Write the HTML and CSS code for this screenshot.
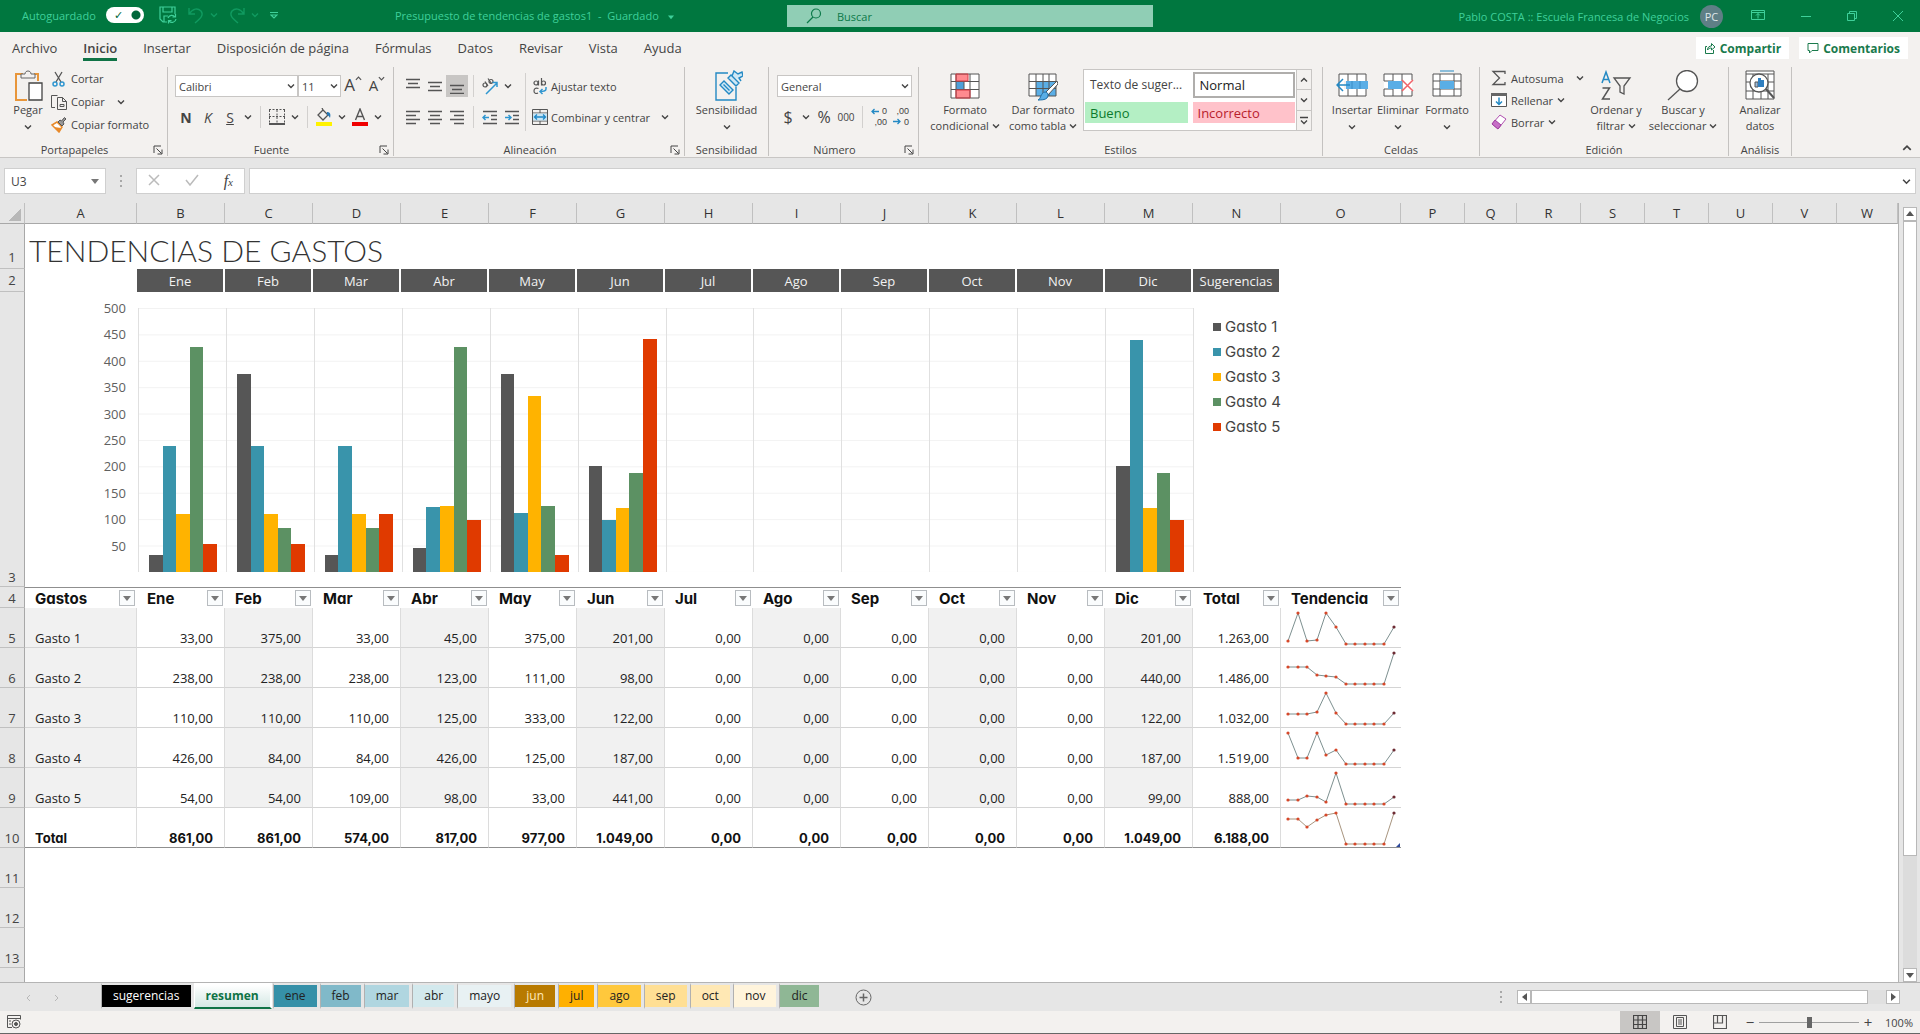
FILE: index.html
```
<!DOCTYPE html>
<html lang="es">
  <head>
    <meta charset="UTF-8" />
    <meta name="viewport" content="width=device-width, initial-scale=1.0" />
    <title>Presupuesto de tendencias de gastos1</title>
    <link rel="stylesheet" href="styles.css">
  </head>
  <body>
    <!-- icon sprite -->
    <svg class="sprite" aria-hidden="true">
      <symbol id="caret" viewBox="0 0 8 8"><path d="M1 2.5l3 3 3-3" fill="none" stroke="currentColor" stroke-width="1.4"/></symbol>
      <symbol id="caret-up" viewBox="0 0 8 8"><path d="M1 5.5l3-3 3 3" fill="none" stroke="currentColor" stroke-width="1.4"/></symbol>
      <symbol id="tri" viewBox="0 0 8 8"><path d="M0 2h8L4 7z" fill="currentColor"/></symbol>
      <symbol id="launcher" viewBox="0 0 10 10"><path d="M1 8V1h7M3.500 3.500l5 5M9 4.500V9H4.500" fill="none" stroke="currentColor"/></symbol>
      <symbol id="al-top" viewBox="0 0 16 16"><path d="M1 1.500h14M3 5.500h10M1 9.500h14" fill="none" stroke="currentColor" stroke-width="1.3"/></symbol>
      <symbol id="al-mid" viewBox="0 0 16 16"><path d="M1 4.500h14M3 8.500h10M1 12.500h14" fill="none" stroke="currentColor" stroke-width="1.3"/></symbol>
      <symbol id="al-bot" viewBox="0 0 16 16"><path d="M1 7.500h14M3 11.500h10M1 15.500h14" fill="none" stroke="currentColor" stroke-width="1.3"/></symbol>
      <symbol id="al-left" viewBox="0 0 16 16"><path d="M1 2.500h14M1 6.500h10M1 10.500h14M1 14.500h10" fill="none" stroke="currentColor" stroke-width="1.3"/></symbol>
      <symbol id="al-center" viewBox="0 0 16 16"><path d="M1 2.500h14M3 6.500h10M1 10.500h14M3 14.500h10" fill="none" stroke="currentColor" stroke-width="1.3"/></symbol>
      <symbol id="al-right" viewBox="0 0 16 16"><path d="M1 2.500h14M5 6.500h10M1 10.500h14M5 14.500h10" fill="none" stroke="currentColor" stroke-width="1.3"/></symbol>
    </svg>

    <header class="titlebar">
      <label class="autosave">Autoguardado
        <input type="checkbox" class="switch" checked>
      </label>
      <button class="tb-btn" aria-label="Guardar">
        <svg width="18" height="18" viewBox="0 0 18 18" fill="none" stroke="currentColor" stroke-width="1.2"><path d="M8 16H4l-3-3V1h15v7M4 1v5h9V1M5 16v-6h4"/><path d="M9 12a4 4 0 0 1 7-1M16.500 8v3h-3M17 13a4 4 0 0 1-7 2M9.500 17.500v-3h3"/></svg>
      </button>
      <button class="tb-btn dim" aria-label="Deshacer">
        <svg width="16" height="18" viewBox="0 0 16 18" fill="none" stroke="currentColor" stroke-width="1.4"><path d="M1 2v6h6M1 8C5 2 10 2 13 5c3 4 0 7-6 12"/></svg>
        <svg width="8" height="8"><use href="#caret"/></svg>
      </button>
      <button class="tb-btn dim" aria-label="Rehacer">
        <svg width="16" height="18" viewBox="0 0 16 18" fill="none" stroke="currentColor" stroke-width="1.400"><path d="M15 2v6H9M15 8C11 2 6 2 3 5c-3 4 0 7 6 12"/></svg>
        <svg width="8" height="8"><use href="#caret"/></svg>
      </button>
      <button class="tb-btn" aria-label="Personalizar barra">
        <svg width="8" height="9" viewBox="0 0 8 9" fill="none" stroke="currentColor" stroke-width="1.2"><path d="M0 1.500h8M1 4l3 3 3-3z"/></svg>
      </button>
      <div class="doc-name">Presupuesto de tendencias de gastos1 &nbsp;-&nbsp; Guardado <svg width="6" height="6"><use href="#tri"/></svg></div>
      <label class="search">
        <svg width="16" height="16" viewBox="0 0 16 16" fill="none" stroke="currentColor" stroke-width="1.2"><circle cx="10" cy="5.500" r="4.500"/><path d="M7 9l-6 6"/></svg>
        <input type="text" placeholder="Buscar" aria-label="Buscar">
      </label>
      <div class="account">
        <span>Pablo COSTA :: Escuela Francesa de Negocios</span>
        <span class="avatar">PC</span>
      </div>
      <div class="window-btns">
        <button aria-label="Opciones de la cinta"><svg width="14" height="12" viewBox="0 0 14 12" fill="none" stroke="currentColor"><path d="M.5 1.500h13v9H.5zM.5 3.500h13M7 9.500v-5M5 6.500l2-2 2 2"/></svg></button>
        <button aria-label="Minimizar"><svg width="10" height="10" viewBox="0 0 10 10" fill="none" stroke="currentColor"><path d="M0 5.500h10"/></svg></button>
        <button aria-label="Restaurar"><svg width="10" height="10" viewBox="0 0 10 10" fill="none" stroke="currentColor"><path d="M.5 2.500h7v7h-7zM2.500 2V.5h7v7H8"/></svg></button>
        <button aria-label="Cerrar"><svg width="10" height="10" viewBox="0 0 10 10" fill="none" stroke="currentColor"><path d="M0 0l10 10M10 0L0 10"/></svg></button>
      </div>
    </header>

    <nav class="tabs">
      <a href="#">Archivo</a>
      <a href="#" class="active">Inicio</a>
      <a href="#">Insertar</a>
      <a href="#">Disposición de página</a>
      <a href="#">Fórmulas</a>
      <a href="#">Datos</a>
      <a href="#">Revisar</a>
      <a href="#">Vista</a>
      <a href="#">Ayuda</a>
      <div class="tabs-right">
        <button class="share"><svg width="12" height="12" viewBox="0 0 12 12" fill="none" stroke="currentColor"><path d="M3 4.500H1.500v7h8V8M3.500 8c0-3 2-4 4-4V1.500L11 5 7.500 8V6c-2 0-3 .5-4 2z"/></svg>Compartir</button>
        <button class="share"><svg width="12" height="12" viewBox="0 0 12 12" fill="none" stroke="currentColor"><path d="M1 1.500h10v7H5L2.500 11V8.500H1z"/></svg>Comentarios</button>
      </div>
    </nav>

    <section class="ribbon">
      <div class="group g-clip">
        <div class="body">
          <button class="big">
            <svg width="32" height="32" viewBox="0 0 32 32" fill="none"><path d="M11 4H4v26h11M22 4h4v7" stroke="#e8963a" stroke-width="2"/><path d="M9 8V4h4c0-4 6-4 6 0h4v4z" fill="#f3f1ef" stroke="#666"/><path d="M17 13h13v17H17z" fill="#fff" stroke="#444" stroke-width="1.300"/></svg>
            <span>Pegar</span><svg width="8" height="8"><use href="#caret"/></svg>
          </button>
          <div class="stack">
            <button><svg width="16" height="16" viewBox="0 0 16 16" fill="none"><path d="M4 1l6 10M11 1L5 11" stroke="#555" stroke-width="1.300"/><circle cx="4" cy="13" r="2" stroke="#2f96d0" stroke-width="1.500"/><circle cx="11" cy="13" r="2" stroke="#2f96d0" stroke-width="1.500"/></svg>Cortar</button>
            <button><svg width="16" height="16" viewBox="0 0 16 16" fill="none" stroke="#555"><path d="M4 13.500H.5V1.500h6M6.500 3.500h5l4 4v8h-9zM11.500 3.500v4h4M9 10.500h4v2H9z"/></svg>Copiar<svg class="far" width="8" height="8"><use href="#caret"/></svg></button>
            <button><svg width="16" height="16" viewBox="0 0 16 16"><path d="M1 8l5-3 5 5-3 5z" fill="#fff" stroke="#e88a2a" stroke-width="1.500"/><path d="M3 10l5 5 2-4z" fill="#e88a2a"/><path d="M7 5l4 4 2-2-1-2 3-3-1.500-1.500L10.500 4 9 3z" fill="#999" stroke="#555"/></svg>Copiar formato</button>
          </div>
        </div>
        <div class="caption more">Portapapeles<svg width="10" height="10"><use href="#launcher"/></svg></div>
      </div>

      <div class="group g-font">
        <div class="body rows">
          <div class="row">
            <select class="sel-font" aria-label="Fuente"><option>Calibri</option></select>
            <select class="sel-size" aria-label="Tamaño"><option>11</option></select>
            <button class="tool grow">A<svg width="7" height="7"><use href="#caret-up"/></svg></button>
            <button class="tool shrink">A<svg width="7" height="7"><use href="#caret"/></svg></button>
          </div>
          <div class="row">
            <button class="tool"><b>N</b></button>
            <button class="tool"><i>K</i></button>
            <button class="tool"><u>S</u></button>
            <button class="drop" aria-label="Subrayado"><svg width="8" height="8"><use href="#caret"/></svg></button>
            <i class="sep"></i>
            <button class="tool" aria-label="Bordes"><svg width="16" height="16" viewBox="0 0 16 16" fill="none" stroke="#555"><path d="M.5 1v13M8 1v13M15.500 1v13M0 .5h16M0 7.500h16" stroke-dasharray="2 1.500"/><path d="M0 15h16" stroke-width="2"/></svg></button>
            <button class="drop" aria-label="Más bordes"><svg width="8" height="8"><use href="#caret"/></svg></button>
            <i class="sep"></i>
            <button class="tool" aria-label="Color de relleno"><svg width="18" height="18" viewBox="0 0 18 18" fill="none"><path d="M8 2l5 5-5 5-5-5zM8 2L7 0" stroke="#555" stroke-width="1.300"/><path d="M12 4c3 0 4 2 3 6-1-2-2-3-3-3z" fill="#2878b4"/><path d="M1 14h16v4H1z" fill="#fff200"/></svg></button>
            <button class="drop" aria-label="Más rellenos"><svg width="8" height="8"><use href="#caret"/></svg></button>
            <button class="tool" aria-label="Color de fuente"><svg width="16" height="18" viewBox="0 0 16 18" fill="none"><path d="M3.500 12L8 1l4.500 11M5 8.500h6" stroke="#555" stroke-width="1.400"/><path d="M0 14h16v4H0z" fill="#f00000"/></svg></button>
            <button class="drop" aria-label="Más colores"><svg width="8" height="8"><use href="#caret"/></svg></button>
          </div>
        </div>
        <div class="caption more">Fuente<svg width="10" height="10"><use href="#launcher"/></svg></div>
      </div>

      <div class="group g-align">
        <div class="body">
          <div class="rows align-left">
            <div class="row">
              <button class="tool" aria-label="Alinear arriba"><svg width="16" height="16"><use href="#al-top"/></svg></button>
              <button class="tool" aria-label="Alinear al medio"><svg width="16" height="16"><use href="#al-mid"/></svg></button>
              <button class="tool on" aria-label="Alinear abajo"><svg width="16" height="16"><use href="#al-bot"/></svg></button>
              <i class="sep"></i>
              <button class="tool" aria-label="Orientación"><svg width="18" height="18" viewBox="0 0 18 18" fill="none"><g stroke="#555" stroke-width="1.200"><circle cx="4" cy="8" r="2"/><path d="M4 4.500l3 4.500M7 1.500l3.500 5"/><circle cx="10" cy="4.500" r="2"/></g><path d="M5 17L16 6M11.500 5.500H16V10" stroke="#2f96d0" stroke-width="1.500"/></svg></button>
              <button class="drop" aria-label="Más orientación"><svg width="8" height="8"><use href="#caret"/></svg></button>
            </div>
            <div class="row">
              <button class="tool" aria-label="Izquierda"><svg width="16" height="16"><use href="#al-left"/></svg></button>
              <button class="tool" aria-label="Centrar"><svg width="16" height="16"><use href="#al-center"/></svg></button>
              <button class="tool" aria-label="Derecha"><svg width="16" height="16"><use href="#al-right"/></svg></button>
              <i class="sep"></i>
              <button class="tool" aria-label="Disminuir sangría"><svg width="16" height="16" viewBox="0 0 16 16" fill="none"><path d="M1 2.500h14M9 6.500h6M9 10.500h6M1 14.500h14" stroke="#555" stroke-width="1.300"/><path d="M7 8.500H1M3.500 6L1 8.500 3.500 11" stroke="#2f96d0" stroke-width="1.500"/></svg></button>
              <button class="tool" aria-label="Aumentar sangría"><svg width="16" height="16" viewBox="0 0 16 16" fill="none"><path d="M1 2.500h14M9 6.500h6M9 10.500h6M1 14.500h14" stroke="#555" stroke-width="1.300"/><path d="M1 8.500h6M4.500 6L7 8.500 4.500 11" stroke="#2f96d0" stroke-width="1.500"/></svg></button>
            </div>
          </div>
          <i class="sep tall"></i>
          <div class="rows">
            <button class="wide"><svg width="16" height="18" viewBox="0 0 16 18" fill="none"><g stroke="#555" stroke-width="1.200"><circle cx="4" cy="6" r="2"/><path d="M6.500 3.500v5M9.500 1v7.500M6.500 11.500c-3-1-4.500 0-4.500 2.500s2 3 4 2"/><circle cx="11.500" cy="6" r="2"/></g><path d="M14 10v2c0 2-2 2.500-6 2.500M10.500 12L8 14.500l2.500 2.500" stroke="#2f96d0" stroke-width="1.500"/></svg>Ajustar texto</button>
            <button class="wide"><svg width="16" height="16" viewBox="0 0 16 16" fill="none"><path d="M.5.5h15v15H.5zM.5 4h15M.5 12h15M8 .5V4M8 12v3.500" stroke="#555"/><path d="M1 4.500h14v7H1z" fill="#c8e6f6"/><path d="M2.500 8h11M5 5.500L2.500 8 5 10.500M11 5.500L13.500 8 11 10.500" stroke="#1e88c8" stroke-width="1.300"/></svg>Combinar y centrar<svg class="far" width="8" height="8"><use href="#caret"/></svg></button>
          </div>
        </div>
        <div class="caption more">Alineación<svg width="10" height="10"><use href="#launcher"/></svg></div>
      </div>

      <div class="group g-sens">
        <div class="body">
          <button class="big">
            <svg width="32" height="32" viewBox="0 0 32 32" fill="none" stroke="#2389c4" stroke-width="1.400"><path d="M17 3H5v27h20V17"/><path d="M9 15l4-4 9 9-4 4zM12.500 14.500l6 6" fill="#cfe8f5"/><path d="M17 8l3-3 8 8-3 3zM21 6l2-5 4 3 4-2 1 4-4 2 2 3" fill="#cfe8f5"/></svg>
            <span>Sensibilidad</span><svg width="8" height="8"><use href="#caret"/></svg>
          </button>
        </div>
        <div class="caption">Sensibilidad</div>
      </div>

      <div class="group g-num">
        <div class="body rows">
          <div class="row"><select class="sel-num" aria-label="Formato de número"><option>General</option></select></div>
          <div class="row">
            <button class="tool money">$</button>
            <button class="drop" aria-label="Moneda"><svg width="8" height="8"><use href="#caret"/></svg></button>
            <button class="tool money">%</button>
            <button class="tool zeros">000</button>
            <i class="sep"></i>
            <button class="tool dec"><span>0</span><span>,00</span><svg width="8" height="7" viewBox="0 0 8 7" fill="none" stroke="#2389c4" stroke-width="1.300"><path d="M8 3.500H1M3.500 1L1 3.500 3.500 6"/></svg></button>
            <button class="tool dec less"><span>,00</span><span>0</span><svg width="8" height="7" viewBox="0 0 8 7" fill="none" stroke="#2389c4" stroke-width="1.300"><path d="M0 3.500h7M4.500 1L7 3.500 4.500 6"/></svg></button>
          </div>
        </div>
        <div class="caption more">Número<svg width="10" height="10"><use href="#launcher"/></svg></div>
      </div>

      <div class="group g-styles">
        <div class="body">
          <button class="big w78">
            <svg width="30" height="32" viewBox="0 0 30 32" fill="none"><path d="M1 4h28v24H1z" fill="#fff"/><path d="M6 4h12v7H6zM6 20h14v8H6z" fill="#ff8a8f"/><path d="M6 12h8v7H6z" fill="#4f9fd8"/><path d="M1 4h28v24H1zM1 11.500h28M1 19.500h28M6 4v24M14 11v9M20 4v24" stroke="#555"/><path d="M6 4h12v7H6zM6 20h14v8H6z" stroke="#d83b44"/></svg>
            <span>Formato<br>condicional <svg width="8" height="8"><use href="#caret"/></svg></span>
          </button>
          <button class="big w78">
            <svg width="30" height="32" viewBox="0 0 30 32" fill="none"><path d="M1 4h27v22H1z" fill="#fff"/><path d="M8 11h20v15H8z" fill="#5aaee6"/><path d="M1 4h27v22H1zM1 11.500h27M1 18.500h27M8 4v22M15 4v22M21 4v22" stroke="#555"/><path d="M29 11L18 22l2 3 10-11z" fill="#fff" stroke="#555"/><path d="M17 22c3 0 4 3 2 6-2 2-6 2-9 2 3-1 3-8 7-8z" fill="#5aaee6" stroke="#1f6fa8"/></svg>
            <span>Dar formato<br>como tabla <svg width="8" height="8"><use href="#caret"/></svg></span>
          </button>
          <div class="gallery">
            <div class="swatches">
              <button>Texto de suger...</button>
              <button class="normal">Normal</button>
              <button class="good">Bueno</button>
              <button class="bad">Incorrecto</button>
            </div>
            <div class="gallery-nav">
              <button aria-label="Arriba"><svg width="8" height="8"><use href="#caret-up"/></svg></button>
              <button aria-label="Abajo"><svg width="8" height="8"><use href="#caret"/></svg></button>
              <button aria-label="Más estilos"><svg width="8" height="9" viewBox="0 0 8 9" fill="none" stroke="currentColor" stroke-width="1.300"><path d="M0 1.500h8M1 4.500l3 3 3-3"/></svg></button>
            </div>
          </div>
        </div>
        <div class="caption">Estilos</div>
      </div>

      <div class="group g-cells">
        <div class="body">
          <button class="big w46">
            <svg width="32" height="32" viewBox="0 0 32 32" fill="none"><path d="M3 4h27v22H3z" fill="#fff"/><path d="M3 4h27v22H3zM12 4v22M21 4v22" stroke="#555"/><path d="M9 11h23v8H9z" fill="#5aaee6"/><path d="M16 11v8M24 11v8" stroke="#3b8cc4"/><path d="M9 11v8" stroke="#f3f1ef" stroke-width="2"/><path d="M14 15H1M7 9l-6 6 6 6" stroke="#2389c4" stroke-width="1.500"/></svg>
            <span>Insertar</span><svg width="8" height="8"><use href="#caret"/></svg>
          </button>
          <button class="big w46">
            <svg width="32" height="32" viewBox="0 0 32 32" fill="none"><path d="M2 4h28v22H2z" fill="#fff"/><path d="M2 11V4h28v6M2 19v7h28v-5M11 4v22M20 4v22M2 11h9M2 19h9" stroke="#555"/><path d="M6 11h14v8H6z" fill="#5aaee6"/><path d="M20 10l11 11M31 10L20 21" stroke="#f0636a" stroke-width="1.500"/></svg>
            <span>Eliminar</span><svg width="8" height="8"><use href="#caret"/></svg>
          </button>
          <button class="big w52">
            <svg width="32" height="32" viewBox="0 0 32 32" fill="none"><path d="M2 4h28v22H2z" fill="#fff"/><path d="M2 4h28v22H2zM9 4v22M23 4v22M2 11h28M2 19h28" stroke="#555"/><path d="M9 11h14v8H9z" fill="#5aaee6"/><path d="M9 1h14" stroke="#2389c4"/></svg>
            <span>Formato</span><svg width="8" height="8"><use href="#caret"/></svg>
          </button>
        </div>
        <div class="caption">Celdas</div>
      </div>

      <div class="group g-edit">
        <div class="body">
          <div class="stack">
            <button><svg width="16" height="16" viewBox="0 0 16 16" fill="none" stroke="#555" stroke-width="1.300"><path d="M14 4V1.500H2L8.500 8 2 14.500h12V12"/></svg>Autosuma<svg class="far" width="8" height="8"><use href="#caret"/></svg></button>
            <button><svg width="16" height="16" viewBox="0 0 16 16" fill="none"><path d="M.5 1.500h15v13H.5z" fill="#fff" stroke="#555"/><path d="M0 1h16v3H0z" fill="#666"/><path d="M8 5.500v7M5 9.500l3 3 3-3" stroke="#2389c4" stroke-width="1.500"/></svg>Rellenar<svg width="8" height="8"><use href="#caret"/></svg></button>
            <button><svg width="16" height="16" viewBox="0 0 16 16"><path d="M1 10l8-9 6 4-8 10z" fill="#fff" stroke="#b04fb0"/><path d="M1 10l3-4 6 5-3 4z" fill="#c66fc6" stroke="#a040a0"/></svg>Borrar<svg width="8" height="8"><use href="#caret"/></svg></button>
          </div>
          <button class="big w66">
            <svg width="32" height="32" viewBox="0 0 32 32" fill="none"><path d="M2 13L6 2l4 11M3.500 9.500h5" stroke="#2389c4" stroke-width="1.500"/><path d="M2.500 18h7l-7 11h7.500" stroke="#555" stroke-width="1.500"/><path d="M14 8h16l-6 8v8l-4-2v-6z" stroke="#555" stroke-width="1.300"/></svg>
            <span>Ordenar y<br>filtrar <svg width="8" height="8"><use href="#caret"/></svg></span>
          </button>
          <button class="big w68">
            <svg width="32" height="32" viewBox="0 0 32 32" fill="none" stroke="#555" stroke-width="1.300"><circle cx="20" cy="11" r="10.500" fill="#fff"/><path d="M13 19L1 30"/></svg>
            <span>Buscar y<br>seleccionar <svg width="8" height="8"><use href="#caret"/></svg></span>
          </button>
        </div>
        <div class="caption">Edición</div>
      </div>

      <div class="group g-anal">
        <div class="body">
          <button class="big">
            <svg width="32" height="32" viewBox="0 0 32 32" fill="none"><path d="M2 1h28v28H2z" fill="#fff"/><path d="M2 1h28v28H2zM2 4h28M2 12h28M2 21h28M9 4v25M17 4v25M24 4v25" stroke="#555"/><circle cx="15" cy="13" r="9" fill="#fff" stroke="#555" stroke-width="1.300"/><path d="M22 19l8 9" stroke="#555" stroke-width="2"/><path d="M11 12h3v5h-3z" fill="#9bd" stroke="#555"/><path d="M14 8h3v9h-3zM17 10h3v7h-3z" fill="#2f7fc0"/></svg>
            <span>Analizar<br>datos</span>
          </button>
        </div>
        <div class="caption">Análisis</div>
      </div>
      <button class="collapse" aria-label="Contraer la cinta"><svg width="10" height="10"><use href="#caret-up"/></svg></button>
    </section>

    <div class="formula-bar">
      <label class="name-box">
        <input type="text" value="U3" aria-label="Cuadro de nombres">
        <svg width="8" height="8"><use href="#tri"/></svg>
      </label>
      <span class="dots"></span>
      <div class="fx">
        <button aria-label="Cancelar"><svg width="12" height="12" viewBox="0 0 12 12" fill="none" stroke="#bbb" stroke-width="1.500"><path d="M1 1l10 10M11 1L1 11"/></svg></button>
        <button aria-label="Introducir"><svg width="14" height="12" viewBox="0 0 14 12" fill="none" stroke="#bbb" stroke-width="1.500"><path d="M1 6l4 5 8-10"/></svg></button>
        <button class="fn" aria-label="Insertar función"><i>f<small>x</small></i></button>
      </div>
      <label class="formula">
        <input type="text" aria-label="Barra de fórmulas">
        <svg width="9" height="9"><use href="#caret"/></svg>
      </label>
    </div>

    <main class="sheet">
      <div class="grid-wrap">
        <table class="grid">
          <colgroup>
            <col class="c-head"><col class="c-a"><col class="c-m" span="13"><col class="c-o"><col class="c-p"><col class="c-q"><col class="c-p" span="5"><col>
          </colgroup>
          <thead><tr id="letters"></tr></thead>
          <tbody id="rows"></tbody>
        </table>
      </div>
      <div class="vscroll">
        <button aria-label="Subir"><svg width="8" height="8" viewBox="0 0 8 8"><path d="M0 6h8L4 1z" fill="currentColor"/></svg></button>
        <div class="vtrack"><div class="vthumb"></div></div>
        <button aria-label="Bajar"><svg width="8" height="8"><use href="#tri"/></svg></button>
      </div>
    </main>

    <nav class="sheet-tabs">
      <button class="nav" aria-label="Anterior"><svg width="5" height="8" viewBox="0 0 5 8"><path d="M4 1L1 4l3 3" fill="none" stroke="currentColor"/></svg></button>
      <button class="nav" aria-label="Siguiente"><svg width="5" height="8" viewBox="0 0 5 8"><path d="M1 1l3 3-3 3" fill="none" stroke="currentColor"/></svg></button>
      <div class="tab-list">
        <a href="#" class="t-sug">sugerencias</a>
        <a href="#" class="t-res">resumen</a>
        <a href="#" class="t-ene">ene</a>
        <a href="#" class="t-feb">feb</a>
        <a href="#" class="t-mar">mar</a>
        <a href="#" class="t-abr">abr</a>
        <a href="#" class="t-may">mayo</a>
        <a href="#" class="t-jun">jun</a>
        <a href="#" class="t-jul">jul</a>
        <a href="#" class="t-ago">ago</a>
        <a href="#" class="t-sep">sep</a>
        <a href="#" class="t-oct">oct</a>
        <a href="#" class="t-nov">nov</a>
        <a href="#" class="t-dic">dic</a>
      </div>
      <button class="add" aria-label="Hoja nueva"><svg width="17" height="17" viewBox="0 0 17 17" fill="none" stroke="#666"><circle cx="8.500" cy="8.500" r="7.500"/><path d="M4.500 8.500h8M8.500 4.500v8" stroke-width="1.500"/></svg></button>
      <div class="hscroll">
        <span class="dots"></span>
        <button aria-label="Izquierda"><svg width="5" height="8" viewBox="0 0 5 8"><path d="M5 0v8L0 4z" fill="currentColor"/></svg></button>
        <div class="htrack"><div class="hthumb"></div></div>
        <button aria-label="Derecha"><svg width="5" height="8" viewBox="0 0 5 8"><path d="M0 0v8l5-4z" fill="currentColor"/></svg></button>
      </div>
    </nav>

    <footer class="status">
      <svg class="macro" width="14" height="14" viewBox="0 0 14 14" fill="none" stroke="#555"><path d="M5 12.500H.5V.5h13v4M.5 3.500h13M2 6h2M2 9h2"/><circle cx="9" cy="9" r="4"/><circle cx="9" cy="9" r="1.500" fill="#555"/></svg>
      <div class="views">
        <button class="on" aria-label="Normal"><svg width="14" height="14" viewBox="0 0 14 14" fill="none" stroke="#444" stroke-width="1.200"><path d="M.5.5h13v13H.5zM.5 5h13M.5 9.500h13M5 .5v13M9.500.5v13"/></svg></button>
        <button aria-label="Diseño de página"><svg width="14" height="14" viewBox="0 0 14 14" fill="none" stroke="#555"><path d="M.5.5h13v13H.5zM3.500 2.500h7v9h-7zM5 5h4M5 7h4M5 9h4"/></svg></button>
        <button aria-label="Salto de página"><svg width="14" height="14" viewBox="0 0 14 14" fill="none" stroke="#555" stroke-width="1.200"><path d="M.5.5h13v13H.5zM4.500.5v7.500h5V.5M.5 8h4"/></svg></button>
      </div>
      <button class="zoom-btn" aria-label="Alejar">−</button>
      <input type="range" class="zoom" min="10" max="190" value="100" aria-label="Zoom">
      <button class="zoom-btn" aria-label="Acercar">+</button>
      <span class="percent">100%</span>
    </footer>
    <script src="script.js"></script>
  </body>
</html>
```
FILE: styles.css
```
* {
  box-sizing: border-box;
  margin: 0;
  padding: 0;
}

body {
  height: 100vh;
  display: flex;
  flex-direction: column;
  overflow: hidden;
  font-family: "Open Sans", "Noto Sans", sans-serif;
  font-size: 12px;
  color: #444;
  background-color: #e6e6e6;
}

button,
input,
select {
  font: inherit;
  color: inherit;
  background: none;
  border: 0;
}

a {
  color: inherit;
  text-decoration: none;
}

svg {
  flex: none;
}

.sprite {
  display: none;
}

/* title bar */
.titlebar {
  display: flex;
  align-items: center;
  height: 32px;
  padding: 0 17px 2px 22px;
  font-size: 11px;
  color: #3fd09a;
  background-color: #00773f;
}

.autosave {
  display: flex;
  align-items: center;
  justify-content: space-between;
  width: 122px;
  margin-right: 15px;
}

.switch {
  appearance: none;
  width: 38px;
  height: 16px;
  border-radius: 8px;
  background: radial-gradient(circle at 30px 8px, #00663a 4px, transparent 5px) #fff;
}

.switch::before {
  content: "✓";
  display: block;
  padding-left: 8px;
  line-height: 16px;
  color: #00663a;
}

.tb-btn {
  display: flex;
  align-items: center;
  gap: 6px;
  margin-right: 11px;
}

.tb-btn.dim {
  color: #109a60;
}

.doc-name {
  width: 498px;
  padding-left: 106px;
  white-space: nowrap;
}

.doc-name svg {
  margin-left: 6px;
}

.search {
  display: flex;
  align-items: center;
  gap: 15px;
  flex: 0 1 366px;
  height: 22px;
  margin-top: 2px;
  padding-left: 19px;
  color: #0c7a4a;
  background-color: #90ceb5;
}

.search input {
  flex: 1;
}

.search input::placeholder {
  color: #0c7a4a;
}

.account {
  display: flex;
  align-items: center;
  gap: 11px;
  margin: 2px 0 0 auto;
}

.avatar {
  width: 23px;
  height: 23px;
  border-radius: 50%;
  line-height: 23px;
  text-align: center;
  color: #dfe6ea;
  background-color: #5f7f86;
}

.window-btns {
  display: flex;
  gap: 36px;
  margin: 2px 0 0 28px;
}

/* ribbon tabs */
.tabs {
  display: flex;
  align-items: center;
  gap: 26px;
  height: 32px;
  padding: 0 12px;
  font-size: 13px;
  background-color: #f3f1ef;
}

.tabs > a {
  height: 26px;
  line-height: 26px;
}

.tabs .active {
  font-weight: 600;
  border-bottom: 3px solid #0f7346;
}

.tabs-right {
  display: flex;
  gap: 10px;
  margin-left: auto;
}

.share {
  display: flex;
  align-items: center;
  gap: 4px;
  height: 22px;
  padding: 0 8px;
  font-size: 12px;
  font-weight: 700;
  color: #1a7a4c;
  background-color: #fff;
}

/* ribbon */
.ribbon {
  display: flex;
  padding: 3px 0 1px;
  font-size: 11px;
  border-bottom: 1px solid #c8c6c4;
  background-color: #f3f1ef;
}

.group {
  flex: none;
  border-right: 1px solid #c4c2c0;
}

.g-clip { width: 168px; }
.g-font { width: 226px; }
.g-align { width: 291px; }
.g-sens { width: 84px; }
.g-num { width: 150px; }
.g-styles { width: 404px; }
.g-cells { width: 157px; }
.g-edit { width: 249px; }
.g-anal { width: 63px; }

.body {
  display: flex;
  height: 77px;
}

.caption {
  display: flex;
  align-items: center;
  line-height: 12px;
  justify-content: center;
  position: relative;
}

.caption.more {
  padding-right: 18px;
}

.caption svg {
  position: absolute;
  right: 4px;
  top: 1px;
}

.ribbon button {
  white-space: nowrap;
}

.big {
  display: flex;
  flex-direction: column;
  align-items: center;
  padding-top: 3px;
  line-height: 16px;
}

.big > span + svg {
  margin-top: 5px;
}

.g-clip .big {
  width: 46px;
  margin-left: 5px;
}

.g-sens .big,
.g-anal .big {
  flex: 1;
}

.w78 { width: 78px; }
.w46 { width: 46px; }
.w52 { width: 52px; }
.w66 { width: 66px; }
.w68 { width: 68px; }

.stack {
  display: flex;
  flex-direction: column;
}

.stack button {
  display: flex;
  align-items: center;
  gap: 4px;
  height: 23px;
}

.far {
  margin-left: 8px;
}

.rows {
  display: flex;
  flex-direction: column;
  gap: 9px;
  padding-top: 8px;
}

.row {
  display: flex;
  align-items: center;
  height: 22px;
}

.tool {
  display: flex;
  align-items: center;
  justify-content: center;
  width: 22px;
  height: 22px;
  font-size: 14px;
}

.tool.on {
  background-color: #c8c6c4;
}

.drop {
  display: flex;
  justify-content: center;
  width: 14px;
}

.sep {
  width: 1px;
  height: 22px;
  margin: 0 5px;
  background-color: #d2d0ce;
}

.sep.tall {
  height: 58px;
  margin: 6px 6px 0 0;
}

.ribbon select {
  appearance: none;
  height: 22px;
  padding-left: 3px;
  border: 1px solid #c8c6c4;
  /* chevron on the right edge */
  background: url("data:image/svg+xml,%3Csvg xmlns='http://www.w3.org/2000/svg' width='8' height='8'%3E%3Cpath d='M1 2.500l3 3 3-3' fill='none' stroke='%23444' stroke-width='1.400'/%3E%3C/svg%3E") no-repeat right 2px center #fff;
}

.sel-font { width: 123px; }
.sel-size { width: 43px; }
.sel-num { width: 135px; }

.g-font .row {
  padding-left: 7px;
}

.g-font .grow,
.g-font .shrink {
  align-items: flex-start;
  width: 24px;
  font-size: 17px;
  line-height: 20px;
}

.g-font .shrink {
  font-size: 15px;
}

.tool svg use {
  color: #555;
}

.align-left {
  width: 131px;
  padding-left: 8px;
}

.wide {
  display: flex;
  align-items: center;
  gap: 3px;
  height: 22px;
}

.g-num .row {
  padding-left: 8px;
}

.money {
  font-size: 16px;
}

.zeros {
  font-size: 10px;
}

.dec {
  position: relative;
  flex-direction: column;
  align-items: flex-end;
  padding-right: 3px;
  font-family: "Liberation Sans", sans-serif;
  font-size: 9px;
  line-height: 11px;
}

.dec svg {
  position: absolute;
  left: 3px;
  top: 2px;
}

.dec.less svg {
  top: 12px;
}

.g-styles .body {
  padding-left: 7px;
}

.gallery {
  display: flex;
  flex: 1;
  height: 62px;
  margin: 2px 10px 0 1px;
  border: 1px solid #c8c6c4;
  background-color: #fff;
}

.swatches {
  flex: 1;
  display: grid;
  grid-template-columns: 1fr 1fr;
  grid-template-rows: 26px 21px;
  gap: 4px 5px;
  padding: 2px 1px;
}

.swatches button {
  padding-left: 5px;
  text-align: left;
  font-size: 12px;
  line-height: 20px;
}

.swatches .normal {
  font-size: 13px;
  color: #222;
  border: 2px solid #b0aeac;
}

.swatches .good {
  font-size: 13px;
  line-height: 18px;
  color: #0b7a2c;
  background-color: #b4efc4;
}

.swatches .bad {
  font-size: 13px;
  line-height: 18px;
  color: #b8202c;
  background-color: #ffc2ca;
}

.gallery-nav {
  display: flex;
  flex-direction: column;
  width: 15px;
  border-left: 1px solid #c8c6c4;
  background-color: #f3f1ef;
}

.gallery-nav button {
  flex: 1;
  display: flex;
  align-items: center;
  justify-content: center;
}

.gallery-nav button + button {
  border-top: 1px solid #c8c6c4;
}

.g-cells .body {
  padding-left: 6px;
}

.g-edit .stack {
  width: 103px;
  padding-left: 11px;
}

.g-edit .stack button {
  height: 22px;
}

.collapse {
  margin: auto 8px 0 auto;
}

/* formula bar */
.formula-bar {
  display: flex;
  height: 45px;
  padding: 10px 4px;
}

.name-box,
.fx,
.formula {
  display: flex;
  align-items: center;
  height: 26px;
  border: 1px solid #cfcfcf;
  background-color: #fff;
}

.name-box {
  width: 102px;
  padding: 0 6px;
}

.name-box input {
  flex: 1;
  min-width: 0;
}

.name-box svg {
  color: #777;
}

.dots {
  width: 2px;
  margin: 0 14px;
  background: repeating-linear-gradient(#a8a8a8 0 2px, transparent 2px 5px) center / 2px 12px no-repeat;
}

.fx {
  justify-content: space-between;
  width: 109px;
  padding: 0 11px;
}

.fn {
  font-family: "Liberation Serif", serif;
  font-size: 16px;
}

.fn small {
  font-size: 11px;
}

.formula {
  flex: 1;
  margin-left: 4px;
  padding-right: 4px;
}

.formula input {
  flex: 1;
}

/* sheet */
.sheet {
  display: flex;
  flex: 1;
  min-height: 0;
  border-bottom: 1px solid #b4b4b4;
}

.grid-wrap {
  flex: 1;
  overflow: hidden;
  border-right: 1px solid #b4b4b4;
}

.grid {
  width: 100%;
  table-layout: fixed;
  border-collapse: separate;
  border-spacing: 0;
  background-color: #fff;
}

.c-head { width: 25px; }
.c-a { width: 112px; }
.c-m { width: 88px; }
.c-o { width: 120px; }
.c-p { width: 64px; }
.c-q { width: 52px; }

.grid thead th {
  height: 21px;
  font-weight: 400;
  font-size: 13px;
  line-height: 18px;
  color: #333;
  border-right: 1px solid #c0c0c0;
  border-bottom: 1px solid #a8a8a8;
  background-color: #e6e6e6;
}

.grid thead .corner {
  background: linear-gradient(135deg, transparent 50%, #b8b8b8 50%) 9px 6px / 12px 12px no-repeat #e6e6e6;
}

.grid tbody th {
  font-weight: 400;
  font-size: 13px;
  line-height: 17px;
  color: #444;
  vertical-align: bottom;
  border-right: 1px solid #a8a8a8;
  border-bottom: 1px solid #c0c0c0;
  background-color: #e6e6e6;
}

.grid .r1 th,
.grid .r2 th {
  padding-bottom: 2px;
}

.r1 { height: 45px; }
.r2 { height: 23px; }
.r3 { height: 295px; }
.r4 { height: 21px; }
.r { height: 40px; }

.grid h1 {
  padding: 6px 0 0 4px;
  font-family: Lato, sans-serif;
  font-weight: 300;
  font-size: 30px;
  line-height: 36px;
  color: #333;
}

.r2 .month {
  font-size: 13px;
  line-height: 18px;
  text-align: center;
  color: #f2f2f2;
  border-right: 2px solid #fff;
  background-color: #565656;
}

/* data table */
.r4 td {
  padding: 0 0 0 10px;
  border-top: 1px solid #8f8f8f;
}

.filter {
  display: flex;
  align-items: center;
  justify-content: space-between;
  height: 20px;
  padding-right: 2px;
  font-family: Inter, sans-serif;
  font-feature-settings: "cv11";
  font-weight: 700;
  font-size: 15px;
  color: #111;
}

.filter button {
  display: flex;
  align-items: center;
  justify-content: center;
  width: 16px;
  height: 16px;
  color: #777;
  border: 1px solid #b8bcc0;
  background-color: #fafcfd;
}

.data td {
  padding: 0 11px 0 0;
  font-size: 13px;
  line-height: 17px;
  text-align: right;
  vertical-align: bottom;
  color: #222;
  border-right: 1px solid #dcdcdc;
  border-bottom: 1px solid #d4d4d4;
}

.data .name {
  padding-left: 10px;
  text-align: left;
}

.data .shade {
  background-color: #f1f1f1;
}

.data .spark {
  padding: 0;
  border-right: 0;
  vertical-align: top;
}

.spark svg {
  display: block;
}

.total td {
  font-family: Inter, sans-serif;
  font-feature-settings: "cv11";
  font-weight: 700;
  color: #111;
  border-bottom-color: #8f8f8f;
}

/* chart */
.r3 td {
  vertical-align: top;
}

.chart {
  display: grid;
  grid-template-columns: 113px 1fr 87px;
  height: 264px;
  margin-top: 16px;
}

.axis {
  display: flex;
  flex-direction: column;
  margin: -13px 12px 13px 0;
  text-align: right;
  font-size: 13px;
  color: #606060;
}

.axis span {
  flex: 1;
  line-height: 26px;
}

.plot {
  display: flex;
  border-right: 1px solid #e0e0e0;
  background: linear-gradient(#f2f2f2 1px, transparent 1px) 0 0 / 100% 10%;
}

.bars {
  flex: 1;
  display: flex;
  align-items: flex-end;
  padding: 0 9px 0 10px;
  border-left: 1px solid #e0e0e0;
}

.bars div {
  flex: 1;
}

.s1 { background-color: #565656; }
.s2 { background-color: #3994ab; }
.s3 { background-color: #ffb300; }
.s4 { background-color: #5c9163; }
.s5 { background-color: #e03a00; }

.legend {
  list-style: none;
  padding: 6px 0 0 19px;
  font-family: Inter, sans-serif;
  font-feature-settings: "cv11";
  font-size: 15px;
  line-height: 25px;
  white-space: nowrap;
}

.legend li {
  display: flex;
  align-items: center;
  gap: 4px;
}

.legend i {
  width: 8px;
  height: 8px;
}

/* scroll bars */
.vscroll {
  display: flex;
  flex-direction: column;
  width: 21px;
  padding: 4px 3px 0 4px;
}

.vscroll button,
.hscroll button {
  display: flex;
  align-items: center;
  justify-content: center;
  width: 14px;
  height: 14px;
  color: #555;
  border: 1px solid #b8b8b8;
  background-color: #fff;
}

.vtrack {
  flex: 1;
  background-color: #dcdcdc;
}

.vthumb {
  height: 85%;
  border: 1px solid #b8b8b8;
  background-color: #fff;
}

/* sheet tabs */
.sheet-tabs {
  display: flex;
  align-items: center;
  height: 28px;
  padding: 0 20px 0 26px;
}

.nav {
  width: 28px;
  text-align: left;
  color: #b8b8b8;
}

.tab-list {
  display: flex;
  align-self: stretch;
  gap: 1px;
  margin-left: 19px;
}

.tab-list a {
  height: 26px;
  line-height: 21px;
  padding: 0 11px;
  font-size: 12px;
  color: #222;
  border: 2px solid #e6e6e6;
  border-left: 1px solid #b0b0b0;
}

.tab-list .t-sug {
  color: #fff;
  background-color: #000;
}

.tab-list .t-res {
  font-weight: 700;
  color: #0f7346;
  border-color: #fff;
  border-bottom: 2px solid #0f7346;
  background: linear-gradient(#fff, #d4e8e4);
}

.t-ene { background-color: #3690a8; }
.t-feb { background-color: #80b9c9; }
.t-mar { background-color: #b0d6e0; }
.t-abr { background-color: #d3e9ed; }
.t-may { background-color: #e8f1f3; }
.tab-list .t-jun { color: #ffe9b8; background-color: #b87a00; }
.t-jul { background-color: #ffb000; }
.t-ago { background-color: #ffc83c; }
.t-sep { background-color: #ffdf94; }
.t-oct { background-color: #ffe8b4; }
.t-nov { background-color: #fff4dc; }
.t-dic { background-color: #8fb795; }

.add {
  height: 17px;
  margin-left: 34px;
}

.hscroll {
  display: flex;
  flex: 0 0 400px;
  margin-left: auto;
}

.hscroll .dots {
  margin: 0 15px 0 0;
}

.htrack {
  flex: 1;
  background-color: #e0e0e0;
}

.hthumb {
  width: 95%;
  height: 14px;
  border: 1px solid #b8b8b8;
  background-color: #fff;
}

/* status bar */
.status {
  display: flex;
  align-items: center;
  height: 23px;
  padding: 0 7px;
  border-bottom: 1px solid #666;
  background-color: #f3f1ef;
}

.views {
  display: flex;
  align-self: stretch;
  margin: 0 1px 0 auto;
}

.views button {
  display: flex;
  align-items: center;
  justify-content: center;
  width: 40px;
}

.views .on {
  background-color: #c8c6c4;
}

.zoom-btn {
  width: 18px;
  font-size: 15px;
  line-height: 20px;
}

.zoom {
  appearance: none;
  width: 100px;
  height: 11px;
  background: linear-gradient(#a0a0a0, #a0a0a0) center / 100% 1px no-repeat;
}

.zoom::-webkit-slider-thumb {
  appearance: none;
  width: 5px;
  height: 11px;
  background-color: #666;
}

.percent {
  width: 36px;
  text-align: right;
  font-size: 11px;
}
```
FILE: script.js
```
const months = ["Ene", "Feb", "Mar", "Abr", "May", "Jun", "Jul", "Ago", "Sep", "Oct", "Nov", "Dic"];
const data = [
  ["Gasto 1", 33, 375, 33, 45, 375, 201, 0, 0, 0, 0, 0, 201],
  ["Gasto 2", 238, 238, 238, 123, 111, 98, 0, 0, 0, 0, 0, 440],
  ["Gasto 3", 110, 110, 110, 125, 333, 122, 0, 0, 0, 0, 0, 122],
  ["Gasto 4", 426, 84, 84, 426, 125, 187, 0, 0, 0, 0, 0, 187],
  ["Gasto 5", 54, 54, 109, 98, 33, 441, 0, 0, 0, 0, 0, 99],
];

const letters = document.querySelector("#letters");
const rows = document.querySelector("#rows");

// 1263 -> 1.263,00
const money = (n) => String(n).replace(/\B(?=(\d{3})+$)/g, ".") + ",00";
const sum = (list) => list.reduce((a, b) => a + b, 0);

const sparkline = (values, line, corner) => {
  const max = Math.max(...values);
  const points = values.map((v, i) => [Math.round(7 + i * 9.6), Math.round(36 - (v / max) * 31)]);
  const dots = points
    .map(([x, y], i) => `<circle cx="${x}" cy="${y}" r="1.6" fill="${i === 11 ? "#6e2c34" : "#d6482a"}"/>`)
    .join("");
  // the last cell carries the table's resize corner
  const mark = corner ? `<path d="M119 35v4h-4z" fill="#2f4a9c"/>` : "";
  return `<svg width="120" height="39"><polyline points="${points.join(" ")}" fill="none" stroke="${line}"/>${dots}${mark}</svg>`;
};

const chart = () => {
  let axis = "";
  for (let v = 500; v > 0; v -= 50) axis += `<span>${v}</span>`;
  const plot = months
    .map((m, i) => {
      const bars = data
        .map((d, s) => `<div class="s${s + 1}" style="height:${d[i + 1] / 5}%"></div>`)
        .join("");
      return `<div class="bars">${bars}</div>`;
    })
    .join("");
  const legend = data.map((d, s) => `<li><i class="s${s + 1}"></i>${d[0]}</li>`).join("");
  return `<div class="chart"><div class="axis">${axis}</div><div class="plot">${plot}</div><ul class="legend">${legend}</ul></div>`;
};

const dataRow = (n, name, values, total) => {
  const cells = values
    .map((v, i) => `<td class="${!total && i % 2 ? "shade" : ""}">${money(v)}</td>`)
    .join("");
  return `<tr class="r data ${total ? "total" : ""}"><th>${n}</th>
    <td class="name ${total ? "" : "shade"}">${name}</td>${cells}<td>${money(sum(values))}</td>
    <td class="spark">${sparkline(values, total ? "#a8957f" : "#7d9090", total)}</td></tr>`;
};

letters.innerHTML =
  `<th class="corner"></th>` + [..."ABCDEFGHIJKLMNOPQRSTUVW"].map((l) => `<th>${l}</th>`).join("");

let html = `<tr class="r1"><th>1</th><td colspan="15"><h1>TENDENCIAS DE GASTOS</h1></td></tr>`;
html += `<tr class="r2"><th>2</th><td></td>${[...months, "Sugerencias"].map((m) => `<td class="month">${m}</td>`).join("")}</tr>`;
html += `<tr class="r3"><th>3</th><td colspan="14">${chart()}</td></tr>`;
html += `<tr class="r4"><th>4</th>${["Gastos", ...months, "Total", "Tendencia"]
  .map((m) => `<td><div class="filter">${m}<button aria-label="Filtrar ${m}"><svg width="8" height="8"><use href="#tri"/></svg></button></div></td>`)
  .join("")}</tr>`;
data.forEach((d, i) => {
  html += dataRow(i + 5, d[0], d.slice(1), false);
});
const totals = months.map((m, i) => sum(data.map((d) => d[i + 1])));
html += dataRow(10, "Total", totals, true);
for (let n = 11; n < 15; n++) html += `<tr class="r"><th>${n < 14 ? n : ""}</th></tr>`;
rows.innerHTML = html;
```
